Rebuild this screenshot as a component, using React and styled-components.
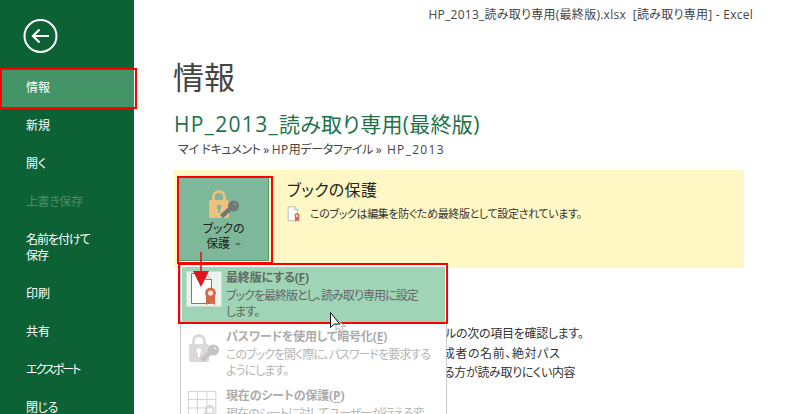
import styled, { createGlobalStyle } from 'styled-components';

const GlobalStyle = createGlobalStyle`
  html, body {
    margin: 0;
    padding: 0;
    background: #fff;
    overflow: hidden;
  }
  body {
    font-family: "Open Sans", "Noto Sans CJK JP", sans-serif;
    font-feature-settings: "palt";
  }
`;

const Page = styled.div`
  width: 786px;
  height: 414px;
  display: flex;
  overflow: hidden;
  position: relative;
`;

const Sidebar = styled.nav`
  width: 134px;
  height: 414px;
  flex: none;
  background: #0c6235;
  display: flex;
  flex-direction: column;
  overflow: hidden;
`;

const BackButton = styled.div`
  height: 69px;
  flex: none;
  padding: 19px 0 0 23px;
  box-sizing: border-box;
`;

const NavItem = styled.div`
  flex: none;
  min-height: 38px;
  padding: ${(p) => (p.$double ? '11px' : '0')} 0 ${(p) => (p.$double ? '11px' : '0')} 26px;
  box-sizing: border-box;
  display: flex;
  align-items: center;
  font-size: 12px;
  line-height: 16px;
  letter-spacing: ${(p) => p.$spacing || 0}px;
  color: ${(p) => (p.$disabled ? '#4c8d69' : '#fff')};
  background: ${(p) => (p.$active ? '#439467' : 'transparent')};
`;

const RedBox = styled.div`
  position: absolute;
  box-sizing: border-box;
  border: 2px solid #f00;
  left: ${(p) => p.$left}px;
  top: ${(p) => p.$top}px;
  width: ${(p) => p.$w}px;
  height: ${(p) => p.$h}px;
  pointer-events: none;
  z-index: 5;
`;

const Main = styled.main`
  flex: 1;
  min-width: 0;
  display: flex;
  flex-direction: column;
  padding-left: 41px;
`;

const TitleBar = styled.div`
  height: 30px;
  padding: 6px 33px 0 0;
  box-sizing: border-box;
  text-align: right;
  font-size: 12px;
  line-height: 18px;
  letter-spacing: 0.26px;
  color: #444;
  white-space: pre;
`;

const PageTitle = styled.h1`
  margin: 27px 0 0 -2px;
  font-size: 31px;
  line-height: 40px;
  font-weight: 400;
  color: #444;
`;

const FileName = styled.h2`
  margin: 13px 0 0 -1px;
  font-size: 21px;
  line-height: 28px;
  font-weight: 400;
  letter-spacing: 0.3px;
  color: #217346;
  white-space: nowrap;
`;

const Wide = styled.span`
  letter-spacing: ${(p) => p.$spacing}px;
`;

const BreadCrumb = styled.div`
  margin: 3px 0 0 3px;
  font-size: 12px;
  line-height: 18px;
  letter-spacing: -0.35px;
  color: #444;
  white-space: pre;
`;

const Panel = styled.section`
  margin: 11px 42px 0 -1px;
  height: 98px;
  flex: none;
  padding: 7px 0 0 4px;
  box-sizing: border-box;
  background: #fff8c4;
  display: flex;
`;

const ProtectButton = styled.div`
  width: 91px;
  height: 84px;
  flex: none;
  box-sizing: border-box;
  border: 1px solid #4f9c75;
  background: #7db89b;
  display: flex;
  flex-direction: column;
  align-items: center;
  padding-top: 11px;
  font-size: 12px;
  line-height: 15px;
  color: #222;
  text-align: center;
`;

const ProtectLabel = styled.div`
  margin-top: 2px;
  letter-spacing: -0.2px;
`;

const Caret = styled.span`
  display: inline-block;
  margin-left: 5px;
  vertical-align: 2px;
  border: 3px solid transparent;
  border-top: 3px solid #667;
  border-bottom: 0;
`;

const PanelBody = styled.div`
  margin-left: 18px;
`;

const PanelTitle = styled.div`
  font-size: 16px;
  line-height: 24px;
  letter-spacing: 0.3px;
  color: #222;
  margin-top: 1px;
`;

const PanelNote = styled.div`
  display: flex;
  align-items: center;
  gap: 9px;
  margin-top: 3px;
  font-size: 11px;
  line-height: 18px;
  letter-spacing: -0.35px;
  color: #333;
`;

const InspectList = styled.div`
  margin-top: 56px;
  font-size: 12px;
  line-height: 19.5px;
  color: #333;
  white-space: nowrap;
`;

const InspectLine = styled.div`
  padding-left: ${(p) => p.$indent}px;
  letter-spacing: ${(p) => p.$spacing}px;
`;

const Dropdown = styled.div`
  position: absolute;
  left: 180px;
  top: 264px;
  width: 267px;
  height: 160px;
  box-sizing: border-box;
  background: #fff;
  border: 1px solid #c6c6c6;
  padding: 2px 1px 0;
  z-index: 3;
`;

const MenuRow = styled.div`
  display: flex;
  height: ${(p) => (p.$selected ? 57 : 59)}px;
  margin-bottom: ${(p) => (p.$selected ? 2 : 0)}px;
  padding: 3px 6px 0 4px;
  box-sizing: border-box;
  gap: 4px;
  background: ${(p) => (p.$selected ? '#9fd4b6' : 'transparent')};
`;

const MenuIcon = styled.div`
  width: 36px;
  height: 36px;
  flex: none;
  margin-top: 1px;
  box-sizing: border-box;
  display: flex;
  align-items: center;
  justify-content: center;
  background: ${(p) => (p.$framed ? '#e9f5ee' : 'transparent')};
  border: 1px solid ${(p) => (p.$framed ? '#c3e2d0' : 'transparent')};
`;

const MenuText = styled.div`
  min-width: 0;
  white-space: nowrap;
  color: ${(p) => (p.$disabled ? '#b5b5b5' : '#666')};
`;

const MenuTitle = styled.div`
  font-size: 12px;
  line-height: 16px;
  font-weight: 700;
  letter-spacing: -0.15px;
  color: ${(p) => (p.$disabled ? '#ababab' : '#5d6b62')};
  u {
    text-underline-offset: 2px;
  }
`;

const MenuDesc = styled.div`
  font-size: 12px;
  line-height: 16px;
  margin-top: 2px;
  letter-spacing: -0.95px;
`;

const Overlay = styled.svg`
  position: absolute;
  left: ${(p) => p.$left}px;
  top: ${(p) => p.$top}px;
  z-index: 6;
  pointer-events: none;
`;

const BackIcon = () => (
  <svg width="36" height="36" viewBox="0 0 36 36" fill="none" stroke="#fff">
    <circle cx="17.5" cy="17" r="16" strokeWidth="2" />
    <path d="M26 17H10M16.5 10.5 10 17l6.5 6.5" strokeWidth="2.2" />
  </svg>
);

const LockIcon = ({ body, keyColor, hole }) => (
  <svg width="32" height="30" viewBox="-1 0 32 30">
    <path d="M4.5 12V8a5.5 5.5 0 0 1 11 0v4" fill="none" stroke={body} strokeWidth="2.8" />
    <rect x="0" y="11" width="20" height="18" rx="2" fill={body} />
    <circle cx="10" cy="18" r="2.4" fill={hole} />
    <rect x="9" y="18" width="2" height="6" fill={hole} />
    <path d="M22 19 12.5 27.5" stroke={keyColor} strokeWidth="4.4" />
    <circle cx="24.5" cy="17" r="5.6" fill={keyColor} />
    <path d="M25.5 14.5 27 16" stroke={hole} strokeWidth="1.2" />
  </svg>
);

const FinalIcon = ({ w = 30, h = 34 }) => (
  <svg width={w} height={h} viewBox="0 0 30 34">
    <path d="M2.5 1.5h14l6 6v24h-20z" fill="#fff" stroke="#7a7a7a" />
    <path d="M16.5 1.5v6h6" fill="#eee" stroke="#7a7a7a" />
    <path d="M17 22v11l4.5-2.5L26 33V22z" fill="#d2694a" />
    <circle cx="21.5" cy="21" r="5.4" fill="#d2694a" />
    <circle cx="21.5" cy="21" r="2.6" fill="#f6e3d6" />
  </svg>
);

const SheetIcon = () => (
  <svg width="36" height="36" viewBox="0 0 36 36">
    <path
      d="M1.5 1.5h29v28h-29zM1.5 10h29M1.5 19h29M11 1.5v28M21 1.5v28"
      fill="none"
      stroke="#cfcfcf"
    />
    <path d="M20 24v-3a4 4 0 0 1 8 0v3" fill="none" stroke="#d8d4d6" strokeWidth="2" />
    <rect x="17" y="24" width="14" height="12" rx="2" fill="#d8d4d6" />
  </svg>
);

const navItems = [
  { label: '情報', active: true },
  { label: '新規' },
  { label: '開く' },
  { label: '上書き保存', disabled: true, spacing: -0.4 },
  { label: <>名前を付けて<br />保存</>, double: true, spacing: -1 },
  { label: '印刷' },
  { label: '共有' },
  { label: 'エクスポート', spacing: -2 },
  { label: '閉じる', spacing: -0.5 },
];

const App = () => {
  return (
    <Page>
      <GlobalStyle />
      <Sidebar>
        <BackButton>
          <BackIcon />
        </BackButton>
        {navItems.map((item, i) => (
          <NavItem
            key={i}
            $active={item.active}
            $disabled={item.disabled}
            $double={item.double}
            $spacing={item.spacing}
          >
            {item.label}
          </NavItem>
        ))}
      </Sidebar>
      <Main>
        <TitleBar>HP_2013_読み取り専用(最終版).xlsx  [読み取り専用] - Excel</TitleBar>
        <PageTitle>情報</PageTitle>
        <FileName>
          <Wide $spacing={1.3}>HP_2013_</Wide>読み取り専用(最終版)
        </FileName>
        <BreadCrumb>
          マイ ドキュメント » <Wide $spacing={0.5}>HP</Wide>用データファイル »  <Wide $spacing={1.3}>HP_2013</Wide>
        </BreadCrumb>
        <Panel>
          <ProtectButton>
            <LockIcon body="#eec27c" keyColor="#6f7a78" hole="#7db89b" />
            <ProtectLabel>
              ブックの
              <br />
              保護
              <Caret />
            </ProtectLabel>
          </ProtectButton>
          <PanelBody>
            <PanelTitle>ブックの保護</PanelTitle>
            <PanelNote>
              <FinalIcon w={14} h={16} />
              このブックは編集を防ぐため最終版として設定されています。
            </PanelNote>
          </PanelBody>
        </Panel>
        <InspectList>
          <InspectLine $indent={106} $spacing={-0.3}>このブックを公開する前に、ファイルの次の項目を確認します。</InspectLine>
          <InspectLine $indent={115} $spacing={0.6}>ドキュメントのプロパティ、作成者の名前、絶対パス</InspectLine>
          <InspectLine $indent={212} $spacing={-0.3}>障がいのある方が読み取りにくい内容</InspectLine>
        </InspectList>
      </Main>

      <Dropdown>
        <MenuRow $selected>
          <MenuIcon $framed>
            <FinalIcon />
          </MenuIcon>
          <MenuText>
            <MenuTitle>最終版にする(<u>F</u>)</MenuTitle>
            <MenuDesc>ブックを最終版とし、読み取り専用に設定<br />します。</MenuDesc>
          </MenuText>
        </MenuRow>
        <MenuRow>
          <MenuIcon>
            <LockIcon body="#dcd8da" keyColor="#c4c4c4" hole="#fff" />
          </MenuIcon>
          <MenuText $disabled>
            <MenuTitle $disabled>パスワードを使用して暗号化(<u>E</u>)</MenuTitle>
            <MenuDesc>このブックを開く際に、パスワードを要求する<br />ようにします。</MenuDesc>
          </MenuText>
        </MenuRow>
        <MenuRow>
          <MenuIcon>
            <SheetIcon />
          </MenuIcon>
          <MenuText $disabled>
            <MenuTitle $disabled>現在のシートの保護(<u>P</u>)</MenuTitle>
            <MenuDesc>現在のシートに対してユーザーが行える変<br />更を制御します。</MenuDesc>
          </MenuText>
        </MenuRow>
      </Dropdown>

      <RedBox $left={0} $top={68} $w={137} $h={41} />
      <RedBox $left={177} $top={176} $w={96} $h={88} />
      <RedBox $left={178} $top={263} $w={270} $h={61} />

      <Overlay $left={192} $top={250} width="18" height="38" viewBox="0 0 18 38">
        <path d="M9 2v22" stroke="#e0141c" strokeWidth="1.6" />
        <path d="M1 21h16L9 37z" fill="#e0141c" />
      </Overlay>
      <Overlay $left={328} $top={311} width="20" height="24" viewBox="0 0 20 24">
        <path d="M8 8v11l3-2.5 2 5 2.5-1-2-5h4z" fill="#fff" fillOpacity="0.75" stroke="#999" strokeWidth="0.8" />
        <path d="M2.5 1.5v15l3.6-3.4h5.6z" fill="#fff" stroke="#111" strokeWidth="1" />
      </Overlay>
    </Page>
  );
};

export default App;
